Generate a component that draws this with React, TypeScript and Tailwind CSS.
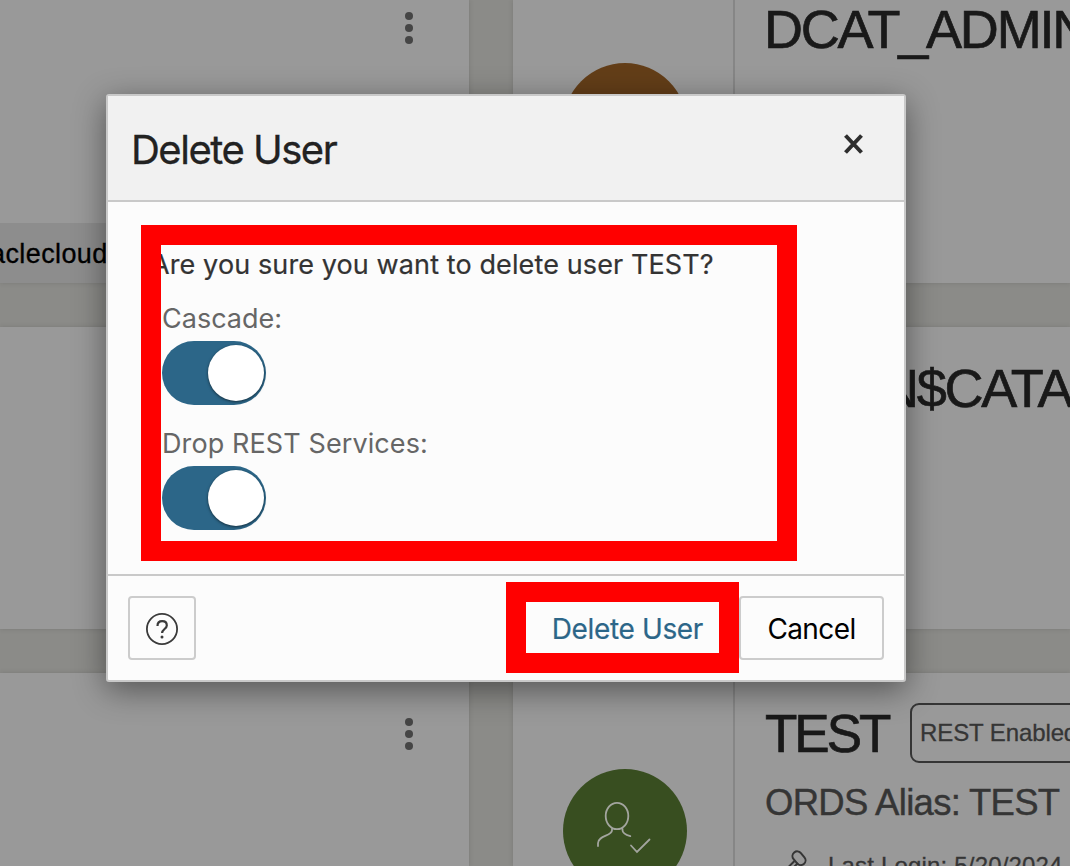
import React from "react";

const helv = "font-['Liberation_Sans',Arial,sans-serif]";
const heading =
  "shrink-0 whitespace-nowrap leading-[60px] text-[#191919] [-webkit-text-stroke:0.7px_#191919]";

function Kebab() {
  return (
    <div className="flex flex-col gap-1">
      <span className="size-2 rounded-full bg-[#454545]" />
      <span className="size-2 rounded-full bg-[#454545]" />
      <span className="size-2 rounded-full bg-[#454545]" />
    </div>
  );
}

function Toggle() {
  return (
    <div className="flex h-16 w-[104px] items-center justify-end rounded-full bg-[#2c6688] pr-0.5">
      <span className="size-14 rounded-full bg-white shadow-[0_1px_3px_rgba(0,0,0,0.55)]" />
    </div>
  );
}

function UserIcon() {
  return (
    <svg className="ml-[34px] mt-[32px]" width="56" height="54" viewBox="0 0 56 54" fill="none" stroke="#a3a59f" strokeWidth="1.8" strokeLinecap="round">
      <ellipse cx="20" cy="15" rx="11.3" ry="13.2" />
      <path d="M15 28v1.200c0 6-14 5-14 13v2.800M25.500 28v1.200c0 3.500 4.500 5 7.800 6M34 44.500l6 6.500 12.500-12.500" />
    </svg>
  );
}

function Avatar({ color, children }: { color: string; children?: React.ReactNode }) {
  return <div className={`size-[124px] shrink-0 rounded-full ${color}`}>{children}</div>;
}

const cardBase = "overflow-hidden bg-[#999] shadow-[0_0_5px_rgba(0,0,0,0.13)]";

export default function App() {
  return (
    <div className="relative h-[866px] w-[1070px] overflow-hidden bg-[#8b8b88]">
      <div className={`grid h-full grid-cols-[469px_557px] grid-rows-[283px_302px_193px] gap-[44px] ${helv}`}>
        <section className={`flex flex-col justify-between ${cardBase}`}>
          <div className="flex justify-end pr-14 pt-3">
            <Kebab />
          </div>
          <div className="flex h-[60px] items-center bg-[#8d8d8d] pt-0.5">
            <span className="-ml-[10px] whitespace-nowrap text-[27px] tracking-[0.400px] text-black [-webkit-text-stroke:0.3px_black]">aclecloud</span>
          </div>
        </section>
        <section className={`flex ${cardBase}`}>
          <div className="flex w-[222px] shrink-0 justify-center border-r-2 border-[#868686] pl-1 pt-[63px]">
            <Avatar color="bg-[#633e18]" />
          </div>
          <h2 className={`-mt-px ml-[29px] text-[54px] tracking-[-2.200px] ${heading}`}>DCAT_ADMIN</h2>
        </section>
        <section className={cardBase} />
        <section className={`flex ${cardBase}`}>
          <div className="w-[222px] shrink-0 border-r-2 border-[#868686]" />
          <h2 className={`ml-[145px] mt-[31px] text-[54px] tracking-[-2.300px] ${heading}`}>N$CATALOG</h2>
        </section>
        <section className={`flex justify-end pr-14 pt-[45px] ${cardBase}`}>
          <Kebab />
        </section>
        <section className={`flex ${cardBase}`}>
          <div className="flex w-[222px] shrink-0 justify-center border-r-2 border-[#868686] pl-1 pt-24">
            <Avatar color="bg-[#384e20]">
              <UserIcon />
            </Avatar>
          </div>
          <div className="flex w-[500px] shrink-0 flex-col pl-[30px]">
            <div className="mt-[30px] flex h-[60px] items-center">
              <h2 className={`w-[145px] pt-0.5 text-[53px] tracking-[-3px] ${heading}`}>TEST</h2>
              <span className="flex h-[60px] w-[190px] items-center whitespace-nowrap rounded-[9px] border-2 border-[#353535] pl-2 text-[24px] tracking-[-0.100px] text-[#353535] [-webkit-text-stroke:0.3px_#353535]">
                REST Enabled
              </span>
            </div>
            <div className="mt-[20px] whitespace-nowrap text-[36.500px] leading-[40px] tracking-[-0.700px] text-[#353535] [-webkit-text-stroke:0.4px_#353535]">ORDS Alias: TEST</div>
            <div className="mt-[24px] flex items-start text-[#353535]">
              <svg className="ml-[22px] mt-[2px]" width="24" height="28" viewBox="0 0 24 28" fill="none" stroke="currentColor" strokeWidth="2">
                <rect x="7" y="2" width="9.500" height="15" rx="4.750" transform="rotate(-40 11.500 9)" />
                <path d="M7.500 12l-6 6M11 14l-4 4" />
              </svg>
              <span className="ml-[17px] mt-px whitespace-nowrap text-[24px] leading-[36px] tracking-[0.180px] [-webkit-text-stroke:0.3px_#353535]">Last Login: 5/20/2024</span>
            </div>
          </div>
        </section>
      </div>

      <div
        role="dialog"
        className="absolute left-[106px] top-[94px] flex h-[588px] w-[800px] flex-col rounded-[3px] border-2 border-[#c9c9c9] bg-[#fcfcfc] font-['Inter',sans-serif] shadow-[0_8px_32px_rgba(0,0,0,0.45)]"
      >
        <header className="flex h-[106px] shrink-0 items-center justify-between border-b-2 border-[#c9c9c9] bg-[#f1f1f1] pl-[23px] pr-[41px]">
          <h1 className="mt-[3px] whitespace-nowrap text-[40px] leading-[48px] tracking-[-1.500px] text-[#222] [-webkit-text-stroke:0.3px_#222]">Delete User</h1>
          <svg className="mb-[8px]" width="19" height="20" viewBox="0 0 19 20" fill="none" stroke="#2e2e2e" strokeWidth="4">
            <path d="M1.500 1.500l16 17M17.500 1.500l-16 17" />
          </svg>
        </header>
        <main className="flex grow flex-col items-start pl-[54px] pt-[45px]">
          <p className="-ml-[11px] whitespace-nowrap text-[27px] leading-9 tracking-[0.110px] text-[#333] [-webkit-text-stroke:0.2px_#333]">Are you sure you want to delete user TEST?</p>
          <label className="mt-[18px] text-[27px] leading-9 text-[#666]">Cascade:</label>
          <div className="mt-1"><Toggle /></div>
          <label className="mt-[21px] whitespace-nowrap text-[27px] leading-9 tracking-[0.100px] text-[#666]">Drop REST Services:</label>
          <div className="mt-1"><Toggle /></div>
        </main>
        <footer className="flex h-[106px] shrink-0 items-center border-t-2 border-[#c9c9c9] px-5 text-[28px]">
          <button className="flex h-16 w-[68px] items-center justify-center rounded border-2 border-[#ccc]">
            <svg className="mt-px" width="34" height="34" viewBox="0 0 34 34" fill="none" stroke="#3a3a3a" strokeWidth="1.8">
              <circle cx="17" cy="17" r="15.100" />
              <path d="M12.500 14c0-3 2-4.800 4.700-4.800s4.600 1.700 4.600 4.300c0 3.400-4.700 3.700-4.700 7.500" strokeWidth="2.200" />
              <circle cx="17" cy="25" r="1.500" fill="#3a3a3a" stroke="none" />
            </svg>
          </button>
          <button className="ml-auto mr-[36px] mt-0.5 whitespace-nowrap tracking-[-0.350px] text-[#2c6688] [-webkit-text-stroke:0.2px_#2c6688]">Delete User</button>
          <button className="h-16 w-[145px] whitespace-nowrap rounded border-2 border-[#ccc] pt-0.5 tracking-[-0.600px] text-black">Cancel</button>
        </footer>
      </div>

      <div className="absolute left-[141px] top-[225px] h-[336px] w-[656px] border-[20px] border-[#f00]" />
      <div className="absolute left-[506px] top-[582px] h-[91px] w-[233px] border-[20px] border-[#f00]" />
    </div>
  );
}
